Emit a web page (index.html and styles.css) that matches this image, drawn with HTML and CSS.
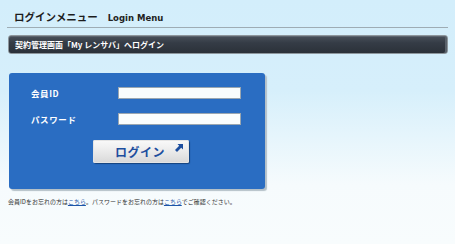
FILE: index.html
```html
<!DOCTYPE html>
<html lang="ja">
<head>
    <meta charset="UTF-8">
    <title>ログインメニュー</title>
    <link rel="stylesheet" href="styles.css">
</head>
<body>
<div class="page">
    <div class="head">
        <h1>ログインメニュー</h1>
        <span class="head-en">Login Menu</span>
    </div>
    <div class="bar">契約管理画面「My レンサバ」へログイン</div>
    <form class="panel">
        <div class="row">
            <label for="uid">会員ID</label>
            <input id="uid" type="text">
        </div>
        <div class="row">
            <label for="pw">パスワード</label>
            <input id="pw" type="password">
        </div>
        <button type="button" class="login-btn">
            ログイン
            <svg class="arrow" width="9" height="9" viewBox="0 0 9 9">
                <path d="M2.5 1 H8 V6.5 L6.2 4.8 L2 9 L0 7 L4.2 2.8 Z" fill="#1d4e9e"/>
            </svg>
        </button>
    </form>
    <p class="note">会員IDをお忘れの方は<a href="#">こちら</a>。パスワードをお忘れの方は<a href="#">こちら</a>でご確認ください。</p>
</div>
</body>
</html>
```

FILE: styles.css
```css
* {
    margin: 0;
    padding: 0;
    box-sizing: border-box;
}
body {
    font-family: "Noto Sans CJK JP", "DejaVu Sans", sans-serif;
    background: linear-gradient(#d3eefb 0, #d6effb 90px, #f6fbfd 185px, #f8fcfd 100%);
    height: 244px;
    overflow: hidden;
}
.page {
    padding: 0 7px 0 7px;
}
.head {
    display: flex;
    align-items: baseline;
    gap: 10px;
    height: 28px;
    padding: 9px 0 0 7px;
    border-bottom: 1px solid #9eacb4;
}
.head h1 {
    font-size: 10.5px;
    font-weight: bold;
    color: #1c1c1c;
}
.head-en {
    font-family: "DejaVu Sans", sans-serif;
    font-size: 8.5px;
    font-weight: bold;
    color: #222;
}
.bar {
    margin: 7px 0 0 1px;
    height: 19px;
    padding: 0 0 0 6px;
    display: flex;
    align-items: center;
    border: 1px solid #8d969c;
    border-radius: 3px;
    background: linear-gradient(#48505a 0, #353c46 40%, #2b3139 100%);
    box-shadow: inset 0 1px 0 #5c646e, inset -2px 0 0 #59616a;
    color: #fff;
    font-size: 8px;
    font-weight: bold;
}
.panel {
    margin: 19px 0 0 2px;
    width: 256px;
    height: 116px;
    background: #2a6dc2;
    border-radius: 3px;
    box-shadow: 2px 2px 1px #b4c0c8;
    padding: 14px 0 0 22px;
    display: flex;
    flex-direction: column;
}
.row {
    display: flex;
    align-items: center;
    height: 11px;
    margin-bottom: 15px;
}
.row label {
    width: 87px;
    color: #fff;
    font-size: 8.5px;
    font-weight: bold;
    letter-spacing: 0.6px;
}
.row input {
    width: 123px;
    height: 12px;
    border: 1px solid #9aa6b0;
    background: #fafdfd;
}
.login-btn {
    margin: 1px 0 0 62px;
    width: 96px;
    height: 23px;
    position: relative;
    border: none;
    border-radius: 2px;
    background: linear-gradient(#fafafa 0, #ececec 45%, #d8d8d8 100%);
    box-shadow: 1px 1px 1px #15427e, inset 0 0 0 1px #e4e4e4;
    color: #1d4e9e;
    font-family: "Noto Sans CJK JP", sans-serif;
    font-size: 12px;
    font-weight: bold;
    letter-spacing: 0.5px;
    padding-right: 2px;
}
.arrow {
    position: absolute;
    right: 5px;
    top: 3px;
}
.note {
    margin: 8px 0 0 1px;
    font-size: 6px;
    color: #333;
}
.note a {
    color: #1d55a8;
}
```
